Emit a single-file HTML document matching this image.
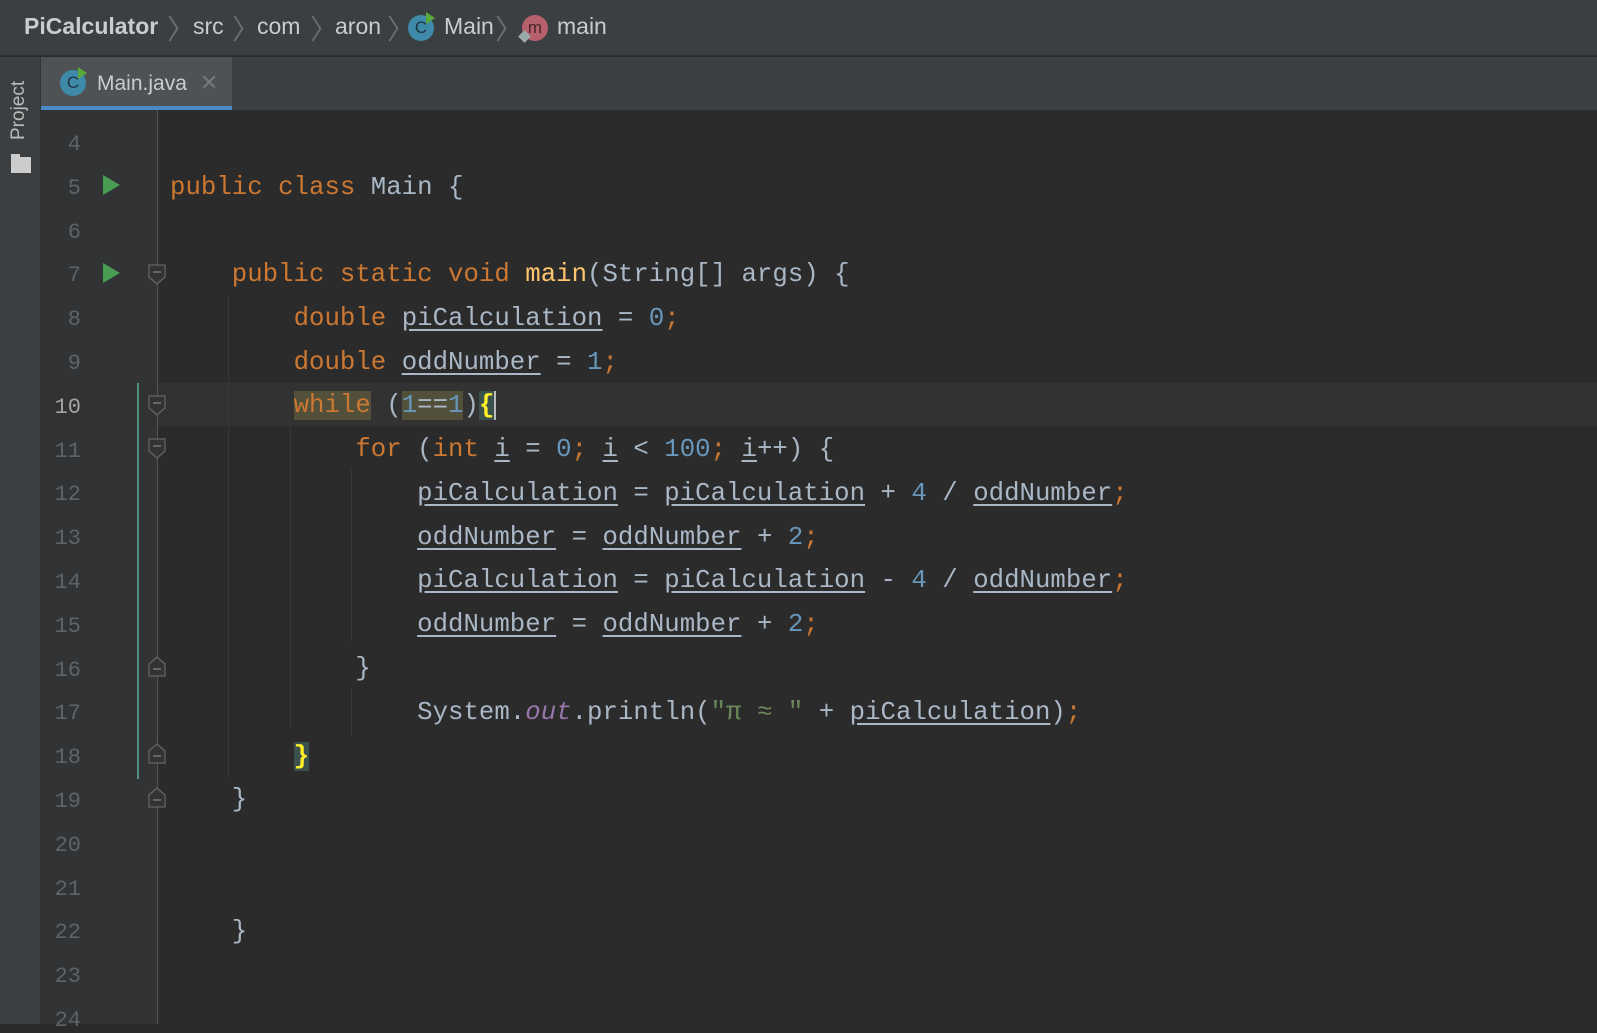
<!DOCTYPE html>
<html><head><meta charset="utf-8"><style>
*{margin:0;padding:0;box-sizing:border-box}
body{width:1597px;height:1024px;overflow:hidden;background:#2b2b2b;position:relative;font-family:"Liberation Sans",sans-serif}
.abs{position:absolute}
#top{left:0;top:0;width:1597px;height:56px;background:#3c3f41;border-bottom:1px solid #2f3133}
#tabs{left:0;top:57px;width:1597px;height:53px;background:#3c3f41}
#strip{left:0;top:57px;width:41px;height:967px;background:#3c3f41;border-right:1px solid #333}
#gut{left:41px;top:110px;width:116px;height:914px;background:#313335}
.crumb{top:13px;font-size:23px;color:#c9cdd0}
.sep{top:8px;color:#6a6d70;font-size:28px;font-weight:200}
.ln{position:absolute;left:41px;width:40px;text-align:right;font-family:"Liberation Mono",monospace;font-size:22px;color:#5f6366}
.code{position:absolute;left:170px;font-family:"Liberation Mono",monospace;font-size:25.7px;color:#a9b7c6;white-space:pre;letter-spacing:0.03px}
.k{color:#cc7832}.n{color:#6897bb}.u{text-decoration:underline;text-decoration-color:#a9b7c6;text-underline-offset:4px}.f{color:#ffc66d}.s{color:#6a8759}.o{color:#9876aa;font-style:italic}
.guide{position:absolute;width:1px;background:#373737}
.icon{border-radius:50%;background:#3e8aa8;color:#1d3440;font-size:17px;text-align:center;line-height:26px;width:26px;height:26px}
</style></head><body>
<div id="top" class="abs"></div>
<div id="tabs" class="abs"></div>
<div class="abs crumb" style="left:24px;font-weight:bold">PiCalculator</div>
<div class="abs sep" style="left:167px">〉</div>
<div class="abs crumb" style="left:193px">src</div>
<div class="abs sep" style="left:232px">〉</div>
<div class="abs crumb" style="left:257px">com</div>
<div class="abs sep" style="left:310px">〉</div>
<div class="abs crumb" style="left:335px">aron</div>
<div class="abs sep" style="left:387px">〉</div>
<div class="abs icon" style="left:408px;top:15px">C</div>
<div class="abs" style="left:426px;top:12px;width:0;height:0;border-left:9px solid #59a839;border-top:6px solid transparent;border-bottom:6px solid transparent"></div>
<div class="abs crumb" style="left:444px">Main</div>
<div class="abs sep" style="left:495px">〉</div>
<div class="abs icon" style="left:522px;top:15px;background:#b6606c;color:#4a2226">m</div>
<div class="abs" style="left:520px;top:32px;width:9px;height:9px;background:#9aa;transform:rotate(45deg)"></div>
<div class="abs crumb" style="left:557px">main</div>

<div class="abs" style="left:41px;top:57px;width:191px;height:53px;background:#4e5254"></div>
<div class="abs" style="left:41px;top:106px;width:191px;height:4px;background:#4a88c7"></div>
<div class="abs icon" style="left:60px;top:70px">C</div>
<div class="abs" style="left:78px;top:67px;width:0;height:0;border-left:9px solid #59a839;border-top:6px solid transparent;border-bottom:6px solid transparent"></div>
<div class="abs" style="left:97px;top:72px;font-size:21px;color:#c9cdd0">Main.java</div>
<div class="abs" style="left:200px;top:70px;font-size:22px;color:#777">✕</div>

<div id="strip" class="abs"></div>
<div class="abs" style="left:8px;top:140px;transform:rotate(-90deg);transform-origin:0 0;font-size:19px;color:#bbb">Project</div>
<div class="abs" style="left:11px;top:157px;width:20px;height:16px;background:#ccc"></div>
<div class="abs" style="left:11px;top:154px;width:9px;height:4px;background:#ccc"></div>

<div id="gut" class="abs"></div>
<div class="abs" style="left:41px;top:383px;width:1556px;height:43px;background:#323232"></div>
<div class="abs" style="left:157px;top:110px;width:1px;height:914px;background:#555"></div>
<div class="abs" style="left:137px;top:383px;width:2px;height:396px;background:#4e8f80"></div>

<div class="guide" style="left:228px;top:296px;height:482px"></div>
<div class="guide" style="left:290px;top:426px;height:302px"></div>
<div class="guide" style="left:351px;top:469px;height:172px"></div>
<div class="guide" style="left:351px;top:688px;height:48px"></div>

<svg class="abs" style="left:100px;top:173px" width="22" height="24"><polygon points="3,2 20,12 3,22" fill="#499c54"/></svg>
<svg class="abs" style="left:100px;top:261px" width="22" height="24"><polygon points="3,2 20,12 3,22" fill="#499c54"/></svg>

<svg class="abs" style="left:148px;top:264px" width="18" height="22"><path d="M1,1H17V13L9,20L1,13Z" fill="#313335" stroke="#5b5d5f" stroke-width="1.5"/><path d="M5,8H13" stroke="#777" stroke-width="1.5"/></svg>
<svg class="abs" style="left:148px;top:395px" width="18" height="22"><path d="M1,1H17V13L9,20L1,13Z" fill="#323232" stroke="#5b5d5f" stroke-width="1.5"/><path d="M5,8H13" stroke="#777" stroke-width="1.5"/></svg>
<svg class="abs" style="left:148px;top:438px" width="18" height="22"><path d="M1,1H17V13L9,20L1,13Z" fill="#313335" stroke="#5b5d5f" stroke-width="1.5"/><path d="M5,8H13" stroke="#777" stroke-width="1.5"/></svg>
<svg class="abs" style="left:148px;top:655px" width="18" height="22"><path d="M1,21H17V9L9,2L1,9Z" fill="#313335" stroke="#5b5d5f" stroke-width="1.5"/><path d="M5,14H13" stroke="#777" stroke-width="1.5"/></svg>
<svg class="abs" style="left:148px;top:742px" width="18" height="22"><path d="M1,21H17V9L9,2L1,9Z" fill="#313335" stroke="#5b5d5f" stroke-width="1.5"/><path d="M5,14H13" stroke="#777" stroke-width="1.5"/></svg>
<svg class="abs" style="left:148px;top:786px" width="18" height="22"><path d="M1,21H17V9L9,2L1,9Z" fill="#313335" stroke="#5b5d5f" stroke-width="1.5"/><path d="M5,14H13" stroke="#777" stroke-width="1.5"/></svg>

<div class="ln" style="top:132px">4</div>
<div class="ln" style="top:176px">5</div>
<div class="ln" style="top:220px">6</div>
<div class="ln" style="top:263px">7</div>
<div class="ln" style="top:307px">8</div>
<div class="ln" style="top:351px">9</div>
<div class="ln" style="top:395px;color:#a4a3a3">10</div>
<div class="ln" style="top:439px">11</div>
<div class="ln" style="top:482px">12</div>
<div class="ln" style="top:526px">13</div>
<div class="ln" style="top:570px">14</div>
<div class="ln" style="top:614px">15</div>
<div class="ln" style="top:658px">16</div>
<div class="ln" style="top:701px">17</div>
<div class="ln" style="top:745px">18</div>
<div class="ln" style="top:789px">19</div>
<div class="ln" style="top:833px">20</div>
<div class="ln" style="top:877px">21</div>
<div class="ln" style="top:920px">22</div>
<div class="ln" style="top:964px">23</div>
<div class="ln" style="top:1008px">24</div>

<div class="code" style="top:173px"><span class="k">public class </span>Main {</div>
<div class="code" style="top:260px">    <span class="k">public static void </span><span class="f">main</span>(String[] args) {</div>
<div class="code" style="top:304px">        <span class="k">double </span><span class="u">piCalculation</span> = <span class="n">0</span><span class="k">;</span></div>
<div class="code" style="top:348px">        <span class="k">double </span><span class="u">oddNumber</span> = <span class="n">1</span><span class="k">;</span></div>
<div class="code" style="top:391px">        <span class="k" style="background:#52503a">while</span> (<span style="background:#52503a"><span class="n">1</span>==<span class="n">1</span></span>)<span style="background:#3b514d;color:#ffef28;font-weight:bold">{</span><span style="border-left:2px solid #bbb"></span></div>
<div class="code" style="top:435px">            <span class="k">for </span>(<span class="k">int </span><span class="u">i</span> = <span class="n">0</span><span class="k">; </span><span class="u">i</span> &lt; <span class="n">100</span><span class="k">; </span><span class="u">i</span>++) {</div>
<div class="code" style="top:479px">                <span class="u">piCalculation</span> = <span class="u">piCalculation</span> + <span class="n">4</span> / <span class="u">oddNumber</span><span class="k">;</span></div>
<div class="code" style="top:523px">                <span class="u">oddNumber</span> = <span class="u">oddNumber</span> + <span class="n">2</span><span class="k">;</span></div>
<div class="code" style="top:566px">                <span class="u">piCalculation</span> = <span class="u">piCalculation</span> - <span class="n">4</span> / <span class="u">oddNumber</span><span class="k">;</span></div>
<div class="code" style="top:610px">                <span class="u">oddNumber</span> = <span class="u">oddNumber</span> + <span class="n">2</span><span class="k">;</span></div>
<div class="code" style="top:654px">            }</div>
<div class="code" style="top:698px">                System.<span class="o">out</span>.println(<span class="s">"π ≈ "</span> + <span class="u">piCalculation</span>)<span class="k">;</span></div>
<div class="code" style="top:742px">        <span style="background:#3b514d;color:#ffef28;font-weight:bold">}</span></div>
<div class="code" style="top:785px">    }</div>
<div class="code" style="top:917px">    }</div>
</body></html>
